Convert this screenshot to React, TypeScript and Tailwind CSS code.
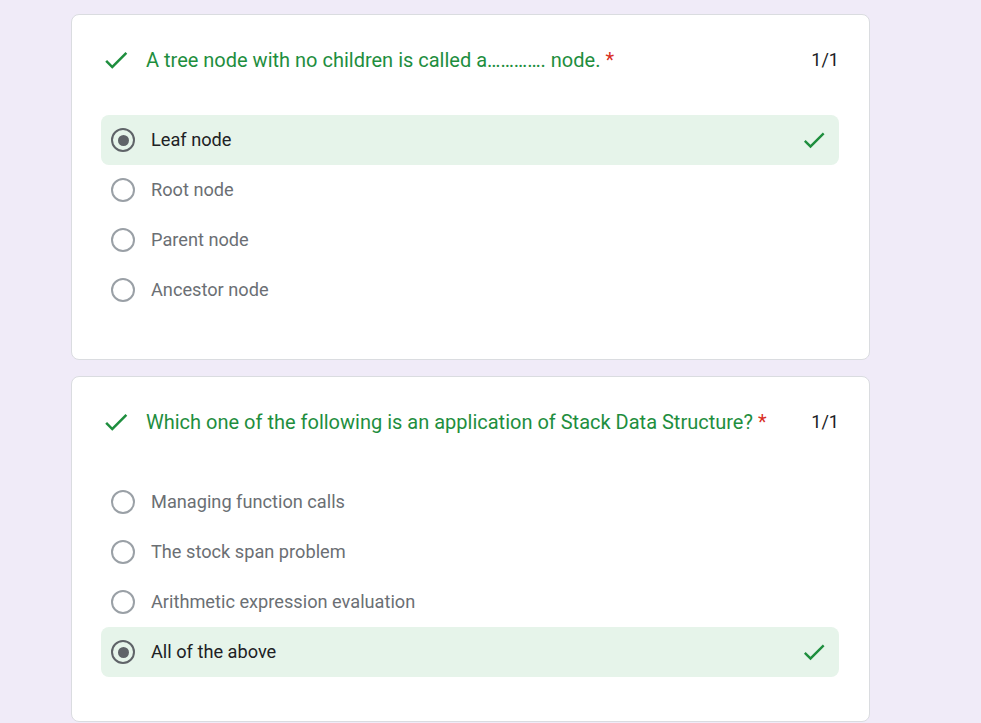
import React from "react";

const CheckIcon = ({ size }: { size: number }) => (
  <svg width={size} height={size} viewBox="0 0 24 24" className="shrink-0" fill="#1e8e3e">
    <path d="M9 16.17L4.83 12l-1.42 1.41L9 19 21 7l-1.41-1.41z" />
  </svg>
);

type Opt = { label: string; selected?: boolean };

const Radio = ({ selected }: { selected?: boolean }) =>
  selected ? (
    <div className="w-6 h-6 rounded-full border-2 border-[#5f6368] flex items-center justify-center shrink-0">
      <div className="w-[11px] h-[11px] rounded-full bg-[#5f6368]" />
    </div>
  ) : (
    <div className="w-6 h-6 rounded-full border-2 border-[#9aa0a6] shrink-0" />
  );

const Question = ({ title, options }: { title: string; options: Opt[] }) => (
  <div className="bg-white border border-[#dadce0] rounded-lg pt-[33px] pb-[44px] pl-[29px] pr-[30px]">
    <div className="flex items-center h-6">
      <div className="w-[30px] h-[30px] flex items-center">
        <CheckIcon size={30} />
      </div>
      <div className="ml-[15px] flex-1 text-[#1e8e3e] text-[20px] leading-6">
        {title} <span className="text-[#d93025]">*</span>
      </div>
      <div className="text-[#202124] text-[18px] leading-6">1/1</div>
    </div>
    <div className="mt-[43px] flex flex-col">
      {options.map((o) => (
        <div
          key={o.label}
          className={
            "h-[50px] flex items-center pl-[10px] pr-[11px] rounded-lg " +
            (o.selected ? "bg-[#e6f4ea]" : "")
          }
        >
          <Radio selected={o.selected} />
          <div
            className={
              "ml-4 flex-1 text-[18.2px] " +
              (o.selected ? "text-[#202124]" : "text-[#6b6f74]")
            }
          >
            {o.label}
          </div>
          {o.selected && <CheckIcon size={28} />}
        </div>
      ))}
    </div>
  </div>
);

export default function App() {
  return (
    <div
      className="w-[981px] h-[723px] bg-[#f0ebf8] overflow-hidden"
      style={{ fontFamily: "Roboto, 'Noto Sans', sans-serif" }}
    >
      <div className="ml-[71px] w-[799px] pt-[14px] flex flex-col gap-4">
        <Question
          title="A tree node with no children is called a…………. node."
          options={[
            { label: "Leaf node", selected: true },
            { label: "Root node" },
            { label: "Parent node" },
            { label: "Ancestor node" },
          ]}
        />
        <Question
          title="Which one of the following is an application of Stack Data Structure?"
          options={[
            { label: "Managing function calls" },
            { label: "The stock span problem" },
            { label: "Arithmetic expression evaluation" },
            { label: "All of the above", selected: true },
          ]}
        />
      </div>
    </div>
  );
}
